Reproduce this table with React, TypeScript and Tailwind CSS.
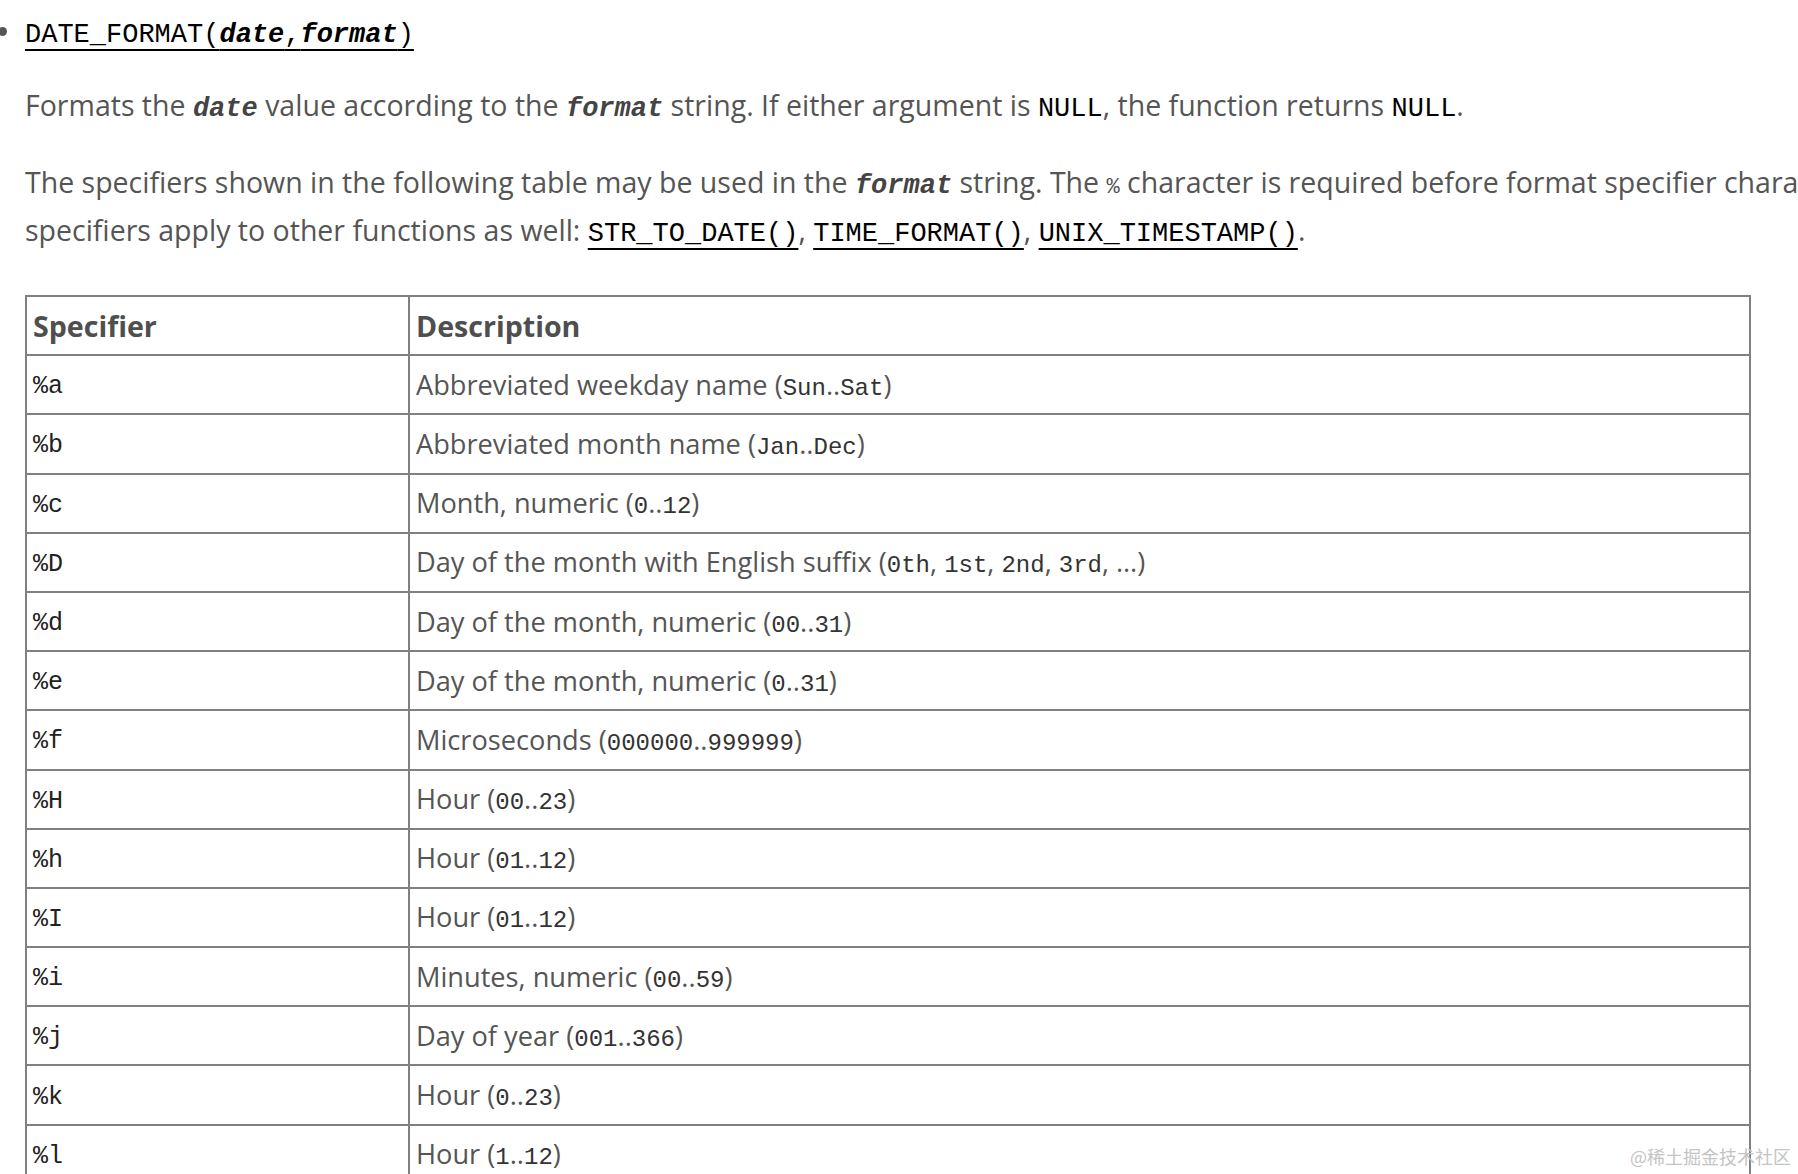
import React from 'react';

type Seg = { t: string; code?: boolean };

const sans = "font-['Open_Sans',sans-serif]";
const mono = "font-['Liberation_Mono',monospace]";

// specifier rows, description split into plain and code parts
const ROWS: { spec: string; desc: Seg[] }[] = [
  { spec: '%a', desc: [{ t: 'Abbreviated weekday name (' }, { t: 'Sun', code: true }, { t: '..' }, { t: 'Sat', code: true }, { t: ')' }] },
  { spec: '%b', desc: [{ t: 'Abbreviated month name (' }, { t: 'Jan', code: true }, { t: '..' }, { t: 'Dec', code: true }, { t: ')' }] },
  { spec: '%c', desc: [{ t: 'Month, numeric (' }, { t: '0', code: true }, { t: '..' }, { t: '12', code: true }, { t: ')' }] },
  {
    spec: '%D',
    desc: [
      { t: 'Day of the month with English suffix (' },
      { t: '0th', code: true },
      { t: ', ' },
      { t: '1st', code: true },
      { t: ', ' },
      { t: '2nd', code: true },
      { t: ', ' },
      { t: '3rd', code: true },
      { t: ', …)' },
    ],
  },
  { spec: '%d', desc: [{ t: 'Day of the month, numeric (' }, { t: '00', code: true }, { t: '..' }, { t: '31', code: true }, { t: ')' }] },
  { spec: '%e', desc: [{ t: 'Day of the month, numeric (' }, { t: '0', code: true }, { t: '..' }, { t: '31', code: true }, { t: ')' }] },
  { spec: '%f', desc: [{ t: 'Microseconds (' }, { t: '000000', code: true }, { t: '..' }, { t: '999999', code: true }, { t: ')' }] },
  { spec: '%H', desc: [{ t: 'Hour (' }, { t: '00', code: true }, { t: '..' }, { t: '23', code: true }, { t: ')' }] },
  { spec: '%h', desc: [{ t: 'Hour (' }, { t: '01', code: true }, { t: '..' }, { t: '12', code: true }, { t: ')' }] },
  { spec: '%I', desc: [{ t: 'Hour (' }, { t: '01', code: true }, { t: '..' }, { t: '12', code: true }, { t: ')' }] },
  { spec: '%i', desc: [{ t: 'Minutes, numeric (' }, { t: '00', code: true }, { t: '..' }, { t: '59', code: true }, { t: ')' }] },
  { spec: '%j', desc: [{ t: 'Day of year (' }, { t: '001', code: true }, { t: '..' }, { t: '366', code: true }, { t: ')' }] },
  { spec: '%k', desc: [{ t: 'Hour (' }, { t: '0', code: true }, { t: '..' }, { t: '23', code: true }, { t: ')' }] },
  { spec: '%l', desc: [{ t: 'Hour (' }, { t: '1', code: true }, { t: '..' }, { t: '12', code: true }, { t: ')' }] },
  { spec: '%M', desc: [{ t: 'Month name (' }, { t: 'January', code: true }, { t: '..' }, { t: 'December', code: true }, { t: ')' }] },
];

const Link: React.FC<{ children: React.ReactNode }> = ({ children }) => (
  <span className={`${mono} text-[27px] leading-none text-black underline decoration-2 underline-offset-[7px]`}>{children}</span>
);

const Arg: React.FC<{ children: React.ReactNode }> = ({ children }) => (
  <span className={`${mono} text-[27px] leading-none font-bold italic text-[#444]`}>{children}</span>
);

const Lit: React.FC<{ children: React.ReactNode }> = ({ children }) => (
  <span className={`${mono} text-[27px] leading-none text-black`}>{children}</span>
);

const sig = `${mono} text-[27px] leading-none text-black underline decoration-2 underline-offset-[7px]`;

const App: React.FC = () => {
  return (
    <div className={`relative h-[1174px] w-[1798px] overflow-hidden bg-white ${sans} text-[28.5px] leading-[48px] text-[#555]`}>
      <div className="pl-[25px] pt-[7px]">
        {/* function signature list item */}
        <div className="relative whitespace-nowrap">
          <span className="absolute left-[-27px] top-[20px] h-[9px] w-[9px] rounded-full bg-[#555]" />
          <span className={sig}>DATE_FORMAT(</span>
          <span className={`${sig} font-bold italic`}>date</span>
          <span className={sig}>,</span>
          <span className={`${sig} font-bold italic`}>format</span>
          <span className={sig}>)</span>
        </div>

        <p className="mt-[26px] whitespace-nowrap">
          Formats the <Arg>date</Arg> value according to the <Arg>format</Arg> string. If either argument is <Lit>NULL</Lit>, the
          function returns <Lit>NULL</Lit>.
        </p>

        <p className="mt-[29px] whitespace-nowrap">
          The specifiers shown in the following table may be used in the <Arg>format</Arg> string. The{' '}
          <span className={`${mono} text-[22px] leading-none`}>%</span> character is required before format specifier characters.
          The
          <br />
          specifiers apply to other functions as well: <Link>STR_TO_DATE()</Link>, <Link>TIME_FORMAT()</Link>,{' '}
          <Link>UNIX_TIMESTAMP()</Link>.
        </p>

        <table className="mt-[41px] w-[1726px] border-collapse border-2 border-[#808080] text-[27.2px]">
          <thead>
            <tr className="h-[59.2px]">
              <th className="w-[383px] border-2 border-[#808080] px-[6px] text-left text-[28.6px] font-bold text-[#4f4f4f]">
                Specifier
              </th>
              <th className="border-2 border-[#808080] px-[6px] text-left text-[28.6px] font-bold text-[#4f4f4f]">Description</th>
            </tr>
          </thead>
          <tbody>
            {ROWS.map((r) => (
              <tr key={r.spec} className="h-[59.2px]">
                <td className={`border-2 border-[#808080] px-[6px] pt-[5px] ${mono} text-[25px] text-[#222]`}>{r.spec}</td>
                <td className="whitespace-nowrap border-2 border-[#808080] px-[6px]">
                  {r.desc.map((s, i) =>
                    s.code ? (
                      <span key={i} className={`${mono} text-[24px] leading-none text-[#333]`}>
                        {s.t}
                      </span>
                    ) : (
                      <span key={i}>{s.t}</span>
                    )
                  )}
                </td>
              </tr>
            ))}
          </tbody>
        </table>
      </div>

      {/* site watermark */}
      <div className="absolute bottom-[8px] right-[7px] font-['Noto_Sans_CJK_SC',sans-serif] text-[18px] leading-[20px] text-[#c4c4c4]">
        @稀土掘金技术社区
      </div>
    </div>
  );
};

export default App;
